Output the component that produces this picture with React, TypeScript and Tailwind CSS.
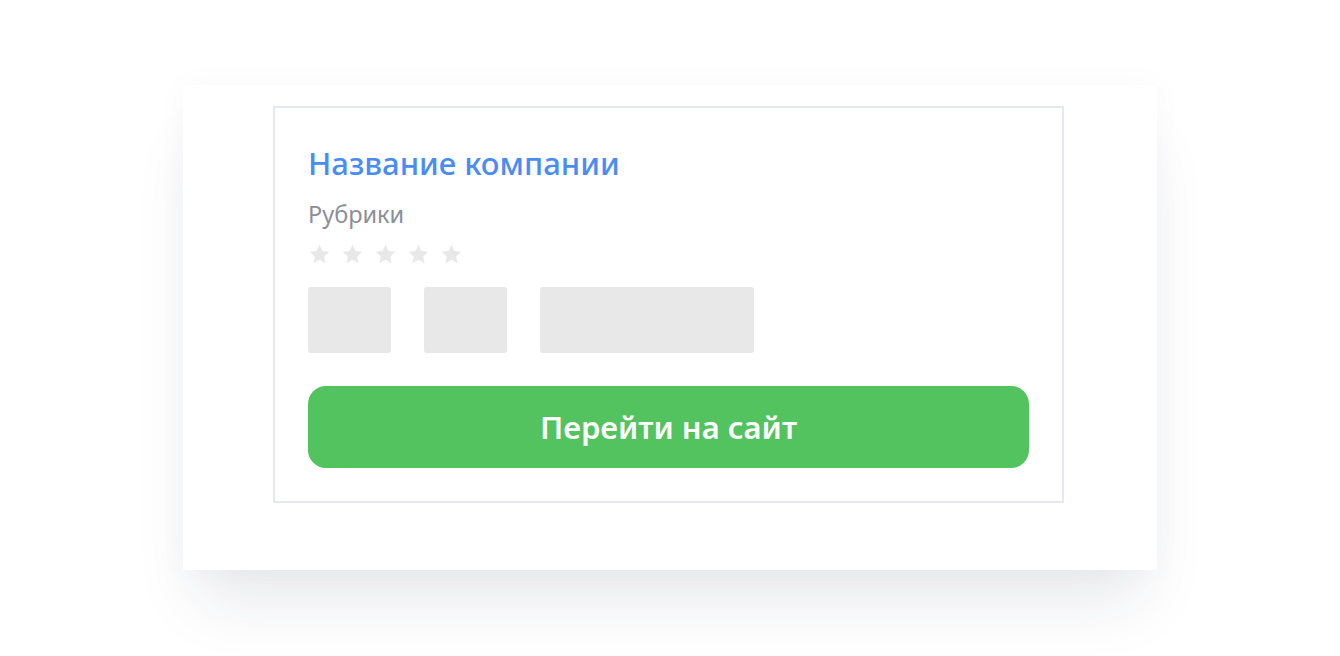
function Star() {
  return (
    <svg width="23" height="23" viewBox="0 0 24 24" className="fill-[#e8e8e8]">
      <path d="M12 1.8l3.1 6.6 7.1.8-5.3 4.9 1.5 7.1L12 17.6l-6.4 3.6 1.5-7.1L1.8 9.2l7.1-.8z" strokeLinejoin="round" />
    </svg>
  )
}

export default function App() {
  return (
    <div className="min-h-[656px] w-full bg-white font-['Noto_Sans',sans-serif]">
      <div className="flex justify-center pt-[85px]">
        <div className="w-[974px] bg-white pl-[90px] pr-[93px] pt-[21px] pb-[67px] shadow-[0_45px_60px_-15px_rgba(30,40,80,0.10),0_0_30px_rgba(30,40,80,0.03)]">
          <div className="border-2 border-[#e6e8f1] px-[33px] pt-[34px] pb-[33px]">
            <h1 className="text-[31px] font-medium leading-[42px] text-[#4a8cf5]">Название компании</h1>
            <div className="mt-[16px] text-[23.5px] leading-[28px] text-[#8b8f99]">Рубрики</div>
            <div className="mt-[15px] flex gap-[10px]">
              {[1, 2, 3, 4, 5].map((i) => (
                <Star key={i} />
              ))}
            </div>
            <div className="mt-[21px] flex gap-[33px]">
              <div className="h-[66px] w-[83px] rounded-[3px] bg-[#e8e8e8]" />
              <div className="h-[66px] w-[83px] rounded-[3px] bg-[#e8e8e8]" />
              <div className="h-[66px] w-[214px] rounded-[3px] bg-[#e8e8e8]" />
            </div>
            <button className="mt-[33px] flex h-[82px] w-full items-center justify-center rounded-[18px] bg-[#52c35e] text-[31px] font-semibold text-white">
              Перейти на сайт
            </button>
          </div>
        </div>
      </div>
    </div>
  )
}
